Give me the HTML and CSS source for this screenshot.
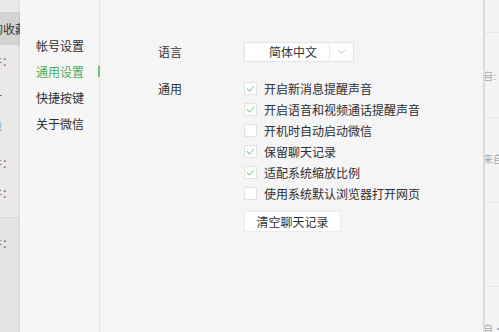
FILE: index.html
```html
<!DOCTYPE html>
<html lang="zh-CN">
<head>
<meta charset="utf-8">
<title>设置</title>
<link rel="stylesheet" href="styles.css">
</head>
<body>
<div class="screen">
  <aside class="bg-left">
    <div class="bl-top"></div>
    <div class="bl-fav">的收藏</div>
    <div class="bl-frag f1">件：</div>
    <div class="bl-frag f2">一</div>
    <div class="bl-frag f3 blue">量</div>
    <div class="bl-frag f4">件：</div>
    <div class="bl-frag f5">件：</div>
    <div class="bl-lower">
      <div class="bl-frag f6">件：</div>
    </div>
  </aside>

  <div class="dialog">
    <nav class="nav">
      <div class="nav-item">帐号设置</div>
      <div class="nav-item active">通用设置</div>
      <div class="nav-item">快捷按键</div>
      <div class="nav-item">关于微信</div>
    </nav>

    <main class="content">
      <div class="row lang-row">
        <div class="label">语言</div>
        <div class="select">
          <span class="select-value">简体中文</span>
          <span class="select-arrow">
            <svg width="9" height="6" viewBox="0 0 9 6"><polyline points="1,1 4.5,4.5 8,1" fill="none" stroke="#c4c4c4" stroke-width="1"/></svg>
          </span>
        </div>
      </div>

      <div class="row general-row">
        <div class="label gen-label">通用</div>
        <div class="options">
          <div class="option"><span class="box checked"><svg width="11" height="11" viewBox="0 0 11 11"><polyline points="2,5.5 4.5,8 9,3" fill="none" stroke="#8ccf95" stroke-width="1.1"/></svg></span><span>开启新消息提醒声音</span></div>
          <div class="option"><span class="box checked"><svg width="11" height="11" viewBox="0 0 11 11"><polyline points="2,5.5 4.5,8 9,3" fill="none" stroke="#8ccf95" stroke-width="1.1"/></svg></span><span>开启语音和视频通话提醒声音</span></div>
          <div class="option"><span class="box"></span><span>开机时自动启动微信</span></div>
          <div class="option"><span class="box checked"><svg width="11" height="11" viewBox="0 0 11 11"><polyline points="2,5.5 4.5,8 9,3" fill="none" stroke="#8ccf95" stroke-width="1.1"/></svg></span><span>保留聊天记录</span></div>
          <div class="option"><span class="box checked"><svg width="11" height="11" viewBox="0 0 11 11"><polyline points="2,5.5 4.5,8 9,3" fill="none" stroke="#8ccf95" stroke-width="1.1"/></svg></span><span>适配系统缩放比例</span></div>
          <div class="option"><span class="box"></span><span>使用系统默认浏览器打开网页</span></div>
          <button class="btn">清空聊天记录</button>
        </div>
      </div>
    </main>
  </div>

  <aside class="bg-right">
    <div class="br-cell c1"></div>
    <div class="br-cell c2"><span class="br-text">自:</span></div>
    <div class="br-cell c3"><span class="br-text">来自</span></div>
    <div class="br-cell c4"></div>
    <div class="br-cell c5"><span class="br-text">自·</span></div>
  </aside>
</div>
</body>
</html>
```

FILE: styles.css
```css
* { box-sizing: border-box; }
html, body {
  margin: 0;
  padding: 0;
  width: 499px;
  height: 332px;
  overflow: hidden;
  font-family: "Noto Sans CJK SC", "Noto Sans", sans-serif;
  font-size: 12px;
  color: #333;
}
.screen {
  display: flex;
  width: 499px;
  height: 332px;
}

/* background app on the left */
.bg-left {
  width: 20px;
  flex: none;
  background: #ebe9e7;
  overflow: hidden;
  display: flex;
  flex-direction: column;
}
.bl-top { height: 12px; }
.bl-fav {
  height: 33px;
  background: #d4d3d2;
  line-height: 33px;
  white-space: nowrap;
  text-indent: -9px;
  color: #333;
  font-size: 12px;
}
.bl-frag {
  white-space: nowrap;
  text-indent: -9px;
  color: #666;
  font-size: 11px;
  height: 16px;
  line-height: 16px;
}
.f1 { margin-top: 8px; }
.f2 { margin-top: 18px; }
.f3 { margin-top: 14px; }
.f4 { margin-top: 22px; }
.f5 { margin-top: 14px; }
.blue { color: #5a7fb0; }
.bl-lower {
  margin-top: 16px;
  flex: 1;
  background: #e5e4e4;
  border-top: 1px solid #d9d8d8;
}
.f6 { margin-top: 17px; }

/* dialog */
.dialog {
  width: 463px;
  flex: none;
  display: flex;
  background: #f5f5f5;
  box-shadow: -1px 0 2px rgba(0,0,0,0.08);
}
.nav {
  width: 80px;
  flex: none;
  border-right: 1px solid #e4e4e4;
  padding-top: 33px;
  background: #f6f6f6;
}
.nav-item {
  position: relative;
  height: 26px;
  line-height: 26px;
  padding-left: 16px;
  font-size: 12px;
  color: #2e2e2e;
}
.nav-item.active { color: #4eae5a; }
.nav-item.active::after {
  content: "";
  position: absolute;
  right: -1px;
  top: 7px;
  width: 2px;
  height: 11px;
  background: #6cc47a;
}

.content {
  flex: 1;
  padding-top: 42px;
  padding-left: 56px;
}
.row {
  display: grid;
  grid-template-columns: 88px auto;
}
.label {
  font-size: 12px;
  color: #333;
  line-height: 20px;
  padding-left: 2px;
}
.select {
  width: 110px;
  height: 20px;
  background: #fff;
  border: 1px solid #e4e4e4;
  display: flex;
}
.select-value {
  width: 85px;
  border-right: 1px solid #e8e8e8;
  line-height: 18px;
  padding-left: 24px;
  font-size: 12px;
}
.select-arrow {
  flex: 1;
  display: flex;
  align-items: center;
  justify-content: center;
}

.general-row { margin-top: 16px; }
.gen-label { line-height: 21px; }
.options { display: flex; flex-direction: column; align-items: flex-start; }
.option {
  height: 21px;
  display: flex;
  align-items: center;
  gap: 7px;
  font-size: 12px;
  color: #2e2e2e;
  white-space: nowrap;
}
.box {
  width: 13px;
  height: 13px;
  background: #fff;
  border: 1px solid #e2e2e2;
  display: flex;
  align-items: center;
  justify-content: center;
  flex: none;
}
.btn {
  margin-top: 7px;
  width: 97px;
  height: 21px;
  background: #fff;
  border: 1px solid #ececec;
  font-family: inherit;
  font-size: 12px;
  color: #333;
  padding: 0;
  line-height: 19px;
}

/* background app on the right */
.bg-right {
  flex: 1;
  background: #f4f4f4;
  border-left: 2px solid #dcdcdc;
  overflow: hidden;
  display: flex;
  flex-direction: column;
}
.br-cell {
  border-bottom: 1px solid #e6e6e6;
  flex: none;
  position: relative;
}
.c1 { height: 33px; }
.c2 { height: 85px; padding-top: 37px; }
.c3 { height: 85px; padding-top: 35px; }
.c4 { height: 84px; }
.c5 { flex: 1; border-bottom: none; padding-top: 36px; }
.br-text {
  display: block;
  margin-left: -2px;
  font-size: 10px;
  line-height: 12px;
  color: #a8a8a8;
  white-space: nowrap;
}
```
